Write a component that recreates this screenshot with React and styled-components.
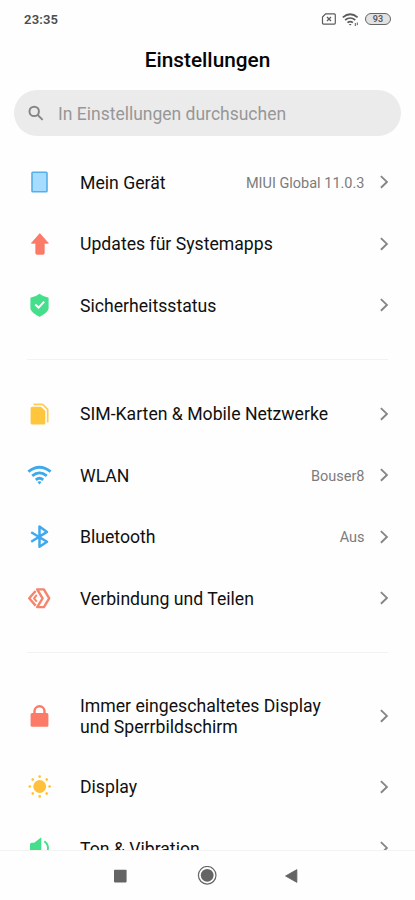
import styled, { createGlobalStyle } from "styled-components";

const GlobalStyle = createGlobalStyle`
  * {
    box-sizing: border-box;
  }

  body {
    margin: 0;
    background: #fefefe;
    font-family: Roboto, sans-serif;
  }
`;

const Screen = styled.div`
  display: flex;
  flex-direction: column;
  width: 415px;
  height: 900px;
  overflow: hidden;
  background: #fefefe;
`;

const StatusBar = styled.div`
  display: flex;
  align-items: center;
  justify-content: space-between;
  flex: none;
  height: 38px;
  padding: 0 24px;
`;

const Clock = styled.span`
  font-size: 13px;
  font-weight: 600;
  letter-spacing: 0.2px;
  color: #4c4c4c;
`;

const StatusIcons = styled.div`
  display: flex;
  align-items: center;
  gap: 6px;
`;

const Battery = styled.div`
  width: 26px;
  height: 12px;
  border: 1.4px solid #666;
  border-radius: 6px;
  background: #e2e2e2;
  font-size: 9px;
  font-weight: 600;
  line-height: 10px;
  text-align: center;
  color: #5a5a5a;
`;

const Title = styled.h1`
  flex: none;
  height: 52px;
  margin: 0;
  padding-top: 8px;
  font-size: 20.8px;
  font-weight: 500;
  line-height: 28px;
  text-align: center;
  color: #050505;
`;

const SearchBar = styled.div`
  display: flex;
  align-items: center;
  gap: 14px;
  flex: none;
  height: 46px;
  margin: 0 14px;
  padding: 0 14px;
  border-radius: 23px;
  background: #ebebeb;
`;

const Placeholder = styled.span`
  padding-top: 2px;
  font-size: 17.5px;
  color: #979797;
`;

const List = styled.div`
  flex: 1;
  min-height: 0;
  padding-top: 15.25px;
  overflow: hidden;
`;

const Divider = styled.hr`
  height: 1px;
  margin: 23px 27px;
  border: 0;
  background: #f2f2f2;
`;

const Row = styled.div`
  display: flex;
  align-items: center;
  height: ${({ $tall }) => ($tall ? "80px" : "61.5px")};
  padding: 0 24px;
`;

const RowIcon = styled.svg`
  flex: none;
  width: 32px;
  height: 32px;
  margin-right: 24px;
`;

const Label = styled.span`
  flex: 1;
  padding-top: 2.25px;
  font-size: 17.65px;
  line-height: 21px;
  white-space: pre-line;
  color: #101010;
`;

const Value = styled.span`
  padding-top: 2.25px;
  margin-right: 14.5px;
  font-size: 14.5px;
  color: #7c7c7c;
`;

const ChevronIcon = styled.svg`
  flex: none;
  width: 12px;
  height: 16px;
`;

const NavBar = styled.nav`
  display: flex;
  align-items: center;
  justify-content: space-between;
  flex: none;
  height: 50px;
  padding: 0 117px 0 113px;
  border-top: 1px solid #f3f3f3;
`;

const icons = {
  device: (
    <rect x="8" y="6.3" width="15" height="19.4" rx="0.8" fill="#a6dcff" stroke="#55b0e8" strokeWidth="1.6" />
  ),
  update: (
    <path d="M15.8 5.6 24.4 15.2H20.2V25.3Q20.2 26.3 19.2 26.3H12.8Q11.8 26.3 11.8 25.3V15.2H7.4Z" fill="#fb7a68" stroke="#fb7a68" strokeWidth="0.8" strokeLinejoin="round" />
  ),
  shield: (
    <>
      <path d="M15.5 5.4Q19.5 8.4 24 9.2V19.8Q22.6 23.6 15.5 27.2Q8.4 23.6 7 19.8V9.2Q11.5 8.4 15.5 5.4Z" fill="#45df8c" stroke="#45df8c" strokeWidth="1.2" strokeLinejoin="round" />
      <path d="m11.3 15.5 3.3 3.2 5.6-6" fill="none" stroke="#fff" strokeWidth="1.9" />
    </>
  ),
  sim: (
    <>
      <path d="M8.2 8.8H17L21.3 13V25Q21.3 26.6 19.7 26.6H8.2Q6.6 26.6 6.6 25V10.4Q6.6 8.8 8.2 8.8Z" fill="#ffc53d" />
      <path d="M9.6 6.4H18.6L23.7 11.4V24.6" fill="none" stroke="#ffcb52" strokeWidth="1.7" />
    </>
  ),
  wifi: (
    <g fill="none" stroke="#3fa9ee" strokeWidth="2.8">
      <path d="M4.4 12.7Q15.5 3.7 26.6 12.7" />
      <path d="M8.2 16.9Q15.5 10.9 22.8 16.9" />
      <path d="M11.8 20.9Q15.5 17.7 19.2 20.9" />
      <path d="M15.5 25.4 13.4 23.1Q15.5 21.4 17.6 23.1Z" fill="#3fa9ee" stroke="none" />
    </g>
  ),
  bluetooth: (
    <path d="M7.2 11.3 23 20.8 15.5 25.8V5.6L23 10.9 7.2 20.8" fill="none" stroke="#3fa9ee" strokeWidth="2.5" strokeLinejoin="round" />
  ),
  share: (
    <g fill="none" stroke="#f5846c" strokeWidth="2.4" strokeLinejoin="round">
      <path d="M13.2 7.4H19.9L25.2 16.3 19.9 25.1H13.2L18.6 16.3Z" />
      <path d="M11.6 9 5.2 16.3 11.6 23.6" />
      <path d="M12.8 12.9 10 16.3 12.8 19.7" strokeWidth="2" />
    </g>
  ),
  lock: (
    <>
      <rect x="6.6" y="13" width="17.8" height="13.7" rx="1.5" fill="#fb7a68" />
      <path d="M10.5 14V11.3A5 5 0 0 1 20.5 11.3V14" fill="none" stroke="#fb7a68" strokeWidth="2.4" />
    </>
  ),
  sun: (
    <g fill="#ffc13b">
      <circle cx="15.7" cy="15.5" r="6.4" />
      {[0, 45, 90, 135, 180, 225, 270, 315].map((deg) => (
        <circle key={deg} cx="15.7" cy="5.6" r="1.3" transform={`rotate(${deg} 15.7 15.5)`} />
      ))}
    </g>
  ),
  sound: (
    <>
      <path d="M7.6 10.8H10.2L17.3 5.3V26.7L10.2 21.2H7.6Q6 21.2 6 19.6V12.4Q6 10.8 7.6 10.8Z" fill="#45df8c" />
      <path d="M20.3 9.2Q24 11.8 24 16T20.3 22.8" fill="none" stroke="#45df8c" strokeWidth="1.9" />
    </>
  ),
};

const sections = [
  [
    { icon: "device", label: "Mein Gerät", value: "MIUI Global 11.0.3" },
    { icon: "update", label: "Updates für Systemapps" },
    { icon: "shield", label: "Sicherheitsstatus" },
  ],
  [
    { icon: "sim", label: "SIM-Karten & Mobile Netzwerke" },
    { icon: "wifi", label: "WLAN", value: "Bouser8" },
    { icon: "bluetooth", label: "Bluetooth", value: "Aus" },
    { icon: "share", label: "Verbindung und Teilen" },
  ],
  [
    { icon: "lock", label: "Immer eingeschaltetes Display\nund Sperrbildschirm", tall: true },
    { icon: "sun", label: "Display" },
    { icon: "sound", label: "Ton & Vibration" },
  ],
];

function SettingsRow({ icon, label, value, tall }) {
  return (
    <Row $tall={tall}>
      <RowIcon viewBox="0 0 32 32">{icons[icon]}</RowIcon>
      <Label>{label}</Label>
      {value && <Value>{value}</Value>}
      <ChevronIcon viewBox="0 0 12 16">
        <path d="M1.9 2.1 7.9 7.9 1.9 13.7" fill="none" stroke="#858585" strokeWidth="1.9" />
      </ChevronIcon>
    </Row>
  );
}

export default function App() {
  return (
    <Screen>
      <GlobalStyle />
      <StatusBar>
        <Clock>23:35</Clock>
        <StatusIcons>
          <svg width="15" height="12" viewBox="0 0 15 12" fill="none" stroke="#5c5c5c">
            <path d="M4.6 0.9H13.3Q14.3 0.9 14.3 1.9V10.1Q14.3 11.1 13.3 11.1H2.5Q1.5 11.1 1.5 10.1V4.1Z" strokeWidth="1.2" />
            <path d="m6 4 4 4m0-4-4 4" strokeWidth="1.3" />
          </svg>
          <svg width="17" height="13" viewBox="0 0 17 13" fill="none" stroke="#5c5c5c" strokeWidth="1.7">
            <path d="M0.8 4.3Q8.2 -1.8 15.6 4.3" />
            <path d="M3.1 7Q8.2 3 13.3 7" />
            <path d="M5.5 9.7Q8.2 7.4 10.9 9.7" />
            <path d="M8.2 12.4 6.7 10.9H9.7Z" fill="#5c5c5c" stroke="none" />
            <path d="M13.3 10V13M15.3 9.5V12.2" strokeWidth="1" />
          </svg>
          <Battery>93</Battery>
        </StatusIcons>
      </StatusBar>
      <Title>Einstellungen</Title>
      <SearchBar>
        <svg width="16" height="16" viewBox="0 0 16 16" fill="none" stroke="#868686" strokeWidth="2">
          <circle cx="6.2" cy="6.4" r="4.7" />
          <path d="m9.6 9.9 5 5" />
        </svg>
        <Placeholder>In Einstellungen durchsuchen</Placeholder>
      </SearchBar>
      <List>
        {sections.map((rows, i) => (
          <div key={i}>
            {i > 0 && <Divider />}
            {rows.map((row) => (
              <SettingsRow key={row.label} {...row} />
            ))}
          </div>
        ))}
      </List>
      <NavBar>
        <svg width="14" height="14" viewBox="0 0 14 14">
          <rect x="1" y="0.8" width="12.6" height="12.6" rx="0.8" fill="#646464" />
        </svg>
        <svg width="22" height="20" viewBox="0 0 22 20">
          <circle cx="12.2" cy="9.3" r="8.8" fill="none" stroke="#646464" strokeWidth="1.2" />
          <circle cx="12.2" cy="9.3" r="6.4" fill="#646464" />
        </svg>
        <svg width="14" height="16" viewBox="0 0 14 16">
          <path d="M12.9 1.6V14.4L1.5 8Z" fill="#646464" stroke="#646464" strokeWidth="0.8" strokeLinejoin="round" />
        </svg>
      </NavBar>
    </Screen>
  );
}
